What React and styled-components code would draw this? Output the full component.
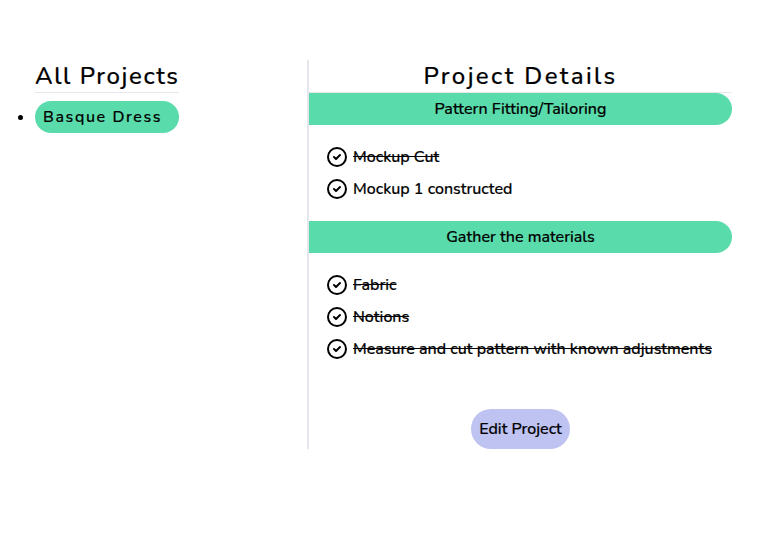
import React from "react";
import styled, { createGlobalStyle } from "styled-components";

const GlobalStyle = createGlobalStyle`
  *, *::before, *::after { box-sizing: border-box; }
  body {
    margin: 0;
    background: #fff;
    color: #000;
    font-family: Nunito, Lato, sans-serif;
    font-size: 16px;
    font-weight: 500;
    line-height: 24px;
    -webkit-text-stroke: 0.2px #000;
  }
  h1, h2, ul { margin: 0; padding: 0; }
`;

const Page = styled.main`
  display: flex;
  align-items: stretch;
  padding: 60px 38px 0 35px;
`;

const Sidebar = styled.nav`
  flex: 0 0 272px;
`;

const Projects = styled.div`
  width: 144px;
`;

const Heading = styled.h1`
  height: 33px;
  border-bottom: 1px solid #e5e7eb;
  font-size: 24px;
  font-weight: 500;
  line-height: 32px;
  letter-spacing: ${(p) => p.$spacing};
  text-align: ${(p) => p.$align || "left"};
  white-space: nowrap;
`;

const ProjectList = styled.ul`
  margin-top: 8px;
  list-style: disc outside;
`;

const Project = styled.li`
  letter-spacing: 1.6px;
`;

const ProjectLink = styled.div`
  height: 32px;
  padding: 4px 8px;
  border-radius: 16px;
  background: #5adbab;
  white-space: nowrap;
`;

const Details = styled.section`
  flex: 1;
  min-width: 0;
  height: 389px;
  border-left: 2px solid #e5e5eb;
`;

const StepTitle = styled.h2`
  height: 32px;
  padding: 4px 0;
  border-radius: 0 16px 16px 0;
  background: #5adbab;
  font-size: 16px;
  font-weight: 500;
  line-height: 24px;
  text-align: center;
`;

const Tasks = styled.ul`
  padding: 16px;
  list-style: none;
`;

const Task = styled.li`
  display: flex;
  align-items: center;
  gap: 4px;
  height: 32px;
  white-space: nowrap;
`;

const TaskLabel = styled.span`
  text-decoration: ${(p) => (p.$done ? "line-through" : "none")};
`;

const Icon = styled.svg`
  flex: none;
  width: 24px;
  height: 24px;
`;

const Actions = styled.div`
  display: flex;
  justify-content: center;
  margin-top: 28px;
`;

const EditButton = styled.button`
  width: 99px;
  height: 40px;
  padding: 0;
  border: 0;
  border-radius: 20px;
  background: #bfc3f2;
  color: #000;
  font: inherit;
`;

const CheckCircle = () => (
  <Icon viewBox="0 0 24 24" fill="none" stroke="#000" strokeWidth="2" strokeLinecap="round" strokeLinejoin="round">
    <path d="M9 12l2 2 4-4m6 2a9 9 0 11-18 0 9 9 0 0118 0z" />
  </Icon>
);

const steps = [
  {
    title: "Pattern Fitting/Tailoring",
    tasks: [
      { label: "Mockup Cut", done: true },
      { label: "Mockup 1 constructed", done: false },
    ],
  },
  {
    title: "Gather the materials",
    tasks: [
      { label: "Fabric", done: true },
      { label: "Notions", done: true },
      { label: "Measure and cut pattern with known adjustments", done: true },
    ],
  },
];

export default function App() {
  return (
    <>
      <GlobalStyle />
      <Page>
        <Sidebar>
          <Projects>
            <Heading $spacing="1.6px">All Projects</Heading>
            <ProjectList>
              <Project>
                <ProjectLink>Basque Dress</ProjectLink>
              </Project>
            </ProjectList>
          </Projects>
        </Sidebar>
        <Details>
          <Heading $spacing="2.4px" $align="center">Project Details</Heading>
          {steps.map((step) => (
            <React.Fragment key={step.title}>
              <StepTitle>{step.title}</StepTitle>
              <Tasks>
                {step.tasks.map((task) => (
                  <Task key={task.label}>
                    <CheckCircle />
                    <TaskLabel $done={task.done}>{task.label}</TaskLabel>
                  </Task>
                ))}
              </Tasks>
            </React.Fragment>
          ))}
          <Actions>
            <EditButton>Edit Project</EditButton>
          </Actions>
        </Details>
      </Page>
    </>
  );
}
